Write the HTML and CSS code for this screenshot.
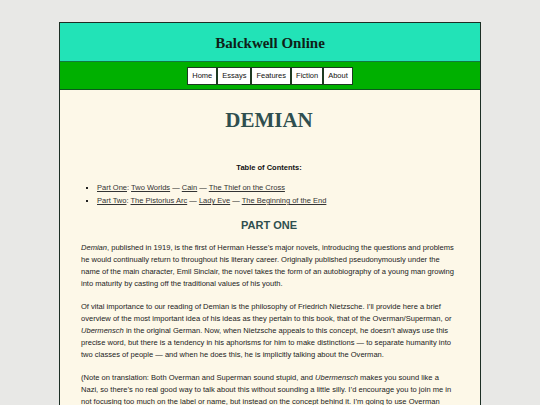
FILE: index.html
```html
<!DOCTYPE html>
<html lang="en">
<head>
<meta charset="utf-8">
<title>Balckwell Online — Demian</title>
<link rel="stylesheet" href="styles.css">
</head>
<body>
<div class="page">
  <header class="site-header">
    <h1 class="site-title">Balckwell Online</h1>
  </header>
  <nav class="site-nav">
    <a class="nav-btn" href="#">Home</a>
    <a class="nav-btn" href="#">Essays</a>
    <a class="nav-btn" href="#">Features</a>
    <a class="nav-btn" href="#">Fiction</a>
    <a class="nav-btn" href="#">About</a>
  </nav>
  <main class="content">
    <h2 class="book-title">DEMIAN</h2>
    <p class="toc-title">Table of Contents:</p>
    <ul class="toc">
      <li><a href="#">Part One</a>: <a href="#">Two Worlds</a> — <a href="#">Cain</a> — <a href="#">The Thief on the Cross</a></li>
      <li><a href="#">Part Two</a>: <a href="#">The Pistorius Arc</a> — <a href="#">Lady Eve</a> — <a href="#">The Beginning of the End</a></li>
    </ul>
    <h3 class="part-title">PART ONE</h3>
    <p class="body-text"><em>Demian</em>, published in 1919, is the first of Herman Hesse’s major novels, introducing the questions and problems he would continually return to throughout his literary career. Originally published pseudonymously under the name of the main character, Emil Sinclair, the novel takes the form of an autobiography of a young man growing into maturity by casting off the traditional values of his youth.</p>
    <p class="body-text">Of vital importance to our reading of Demian is the philosophy of Friedrich Nietzsche. I’ll provide here a brief overview of the most important idea of his ideas as they pertain to this book, that of the Overman/Superman, or <em>Ubermensch</em> in the original German. Now, when Nietzsche appeals to this concept, he doesn’t always use this precise word, but there is a tendency in his aphorisms for him to make distinctions — to separate humanity into two classes of people — and when he does this, he is implicitly talking about the Overman.</p>
    <p class="body-text">(Note on translation: Both Overman and Superman sound stupid, and <em>Ubermensch</em> makes you sound like a Nazi, so there’s no real good way to talk about this without sounding a little silly. I’d encourage you to join me in not focusing too much on the label or name, but instead on the concept behind it. I’m going to use Overman throughout, since it is the most common rendering in English.)</p>
  </main>
</div>
</body>
</html>
```
FILE: styles.css
```css
html, body {
  margin: 0;
  padding: 0;
}
body {
  background: #e8e8e6;
  font-family: "Liberation Sans", Arial, sans-serif;
  color: #222;
  padding-top: 22px;
}
.page {
  width: 420px;
  margin: 0 auto;
  border: 1px solid #1c2e24;
  background: #fdf8e8;
}
.site-header {
  height: 38px;
  background: #22e3b7;
  border-bottom: 1px solid #127a3c;
  display: flex;
  align-items: center;
  justify-content: center;
}
.site-title {
  margin: 0;
  font-family: "Liberation Serif", "Times New Roman", serif;
  font-size: 15px;
  font-weight: bold;
  color: #0f1f18;
  line-height: 18px;
  padding-top: 2px;
}
.site-nav {
  background: #00b000;
  border-bottom: 1px solid #0b5a1c;
  padding: 5px 0 4px;
  display: flex;
  justify-content: center;
}
.nav-btn {
  display: block;
  background: #fff;
  border: 1px solid #1d3a22;
  padding: 0 4px;
  height: 16px;
  line-height: 16px;
  font-size: 7.5px;
  color: #111;
  text-decoration: none;
}
.content {
  padding: 18px 23px 20px 21px;
  font-size: 7.5px;
  line-height: 12px;
}
.book-title {
  margin: 0;
  text-align: center;
  font-family: "Liberation Serif", "Times New Roman", serif;
  font-size: 21px;
  line-height: 24px;
  font-weight: bold;
  color: #2f4f4f;
}
.toc-title {
  margin: 30px 0 0;
  text-align: center;
  font-weight: bold;
  color: #111;
}
.toc {
  margin: 7px 0 0;
  padding-left: 16px;
  list-style: square;
}
.toc li {
  line-height: 13px;
}
.content a {
  color: #333;
  text-decoration: underline;
}
.part-title {
  margin: 12px 0 0;
  text-align: center;
  font-size: 11px;
  line-height: 13px;
  font-weight: bold;
  color: #2f4f4f;
}
.body-text {
  margin: 11px 0 0;
  font-size: 7.55px;
}
.part-title + .body-text {
  margin-top: 10px;
}
```
